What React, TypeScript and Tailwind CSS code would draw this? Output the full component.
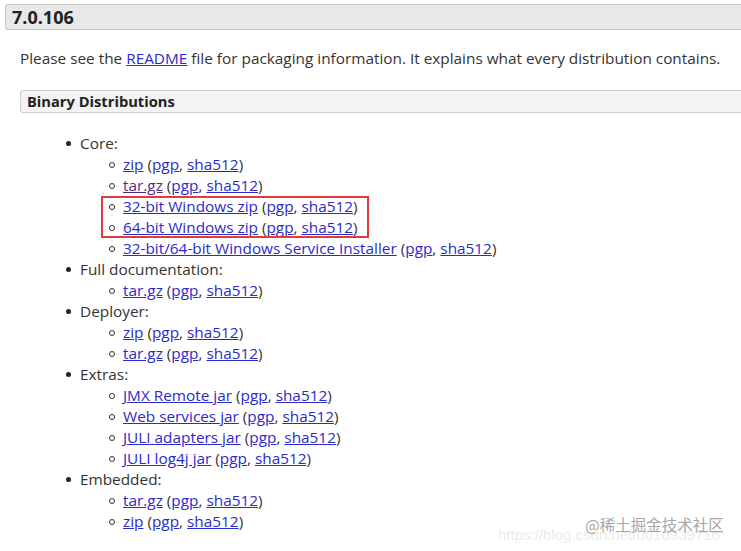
import React from "react";

const L = ({ children, v }: { children: React.ReactNode; v?: boolean }) => (
  <a href="#" className={v ? "underline text-[#5a2a8a]" : "underline text-[#2b2bc8]"}>
    {children}
  </a>
);

const Item = ({ name, v }: { name: string; v?: boolean }) => (
  <li className="flex items-center h-[21px]">
    <span className="w-[6px] h-[6px] rounded-full border border-[#333] mr-[8px] ml-[-14px]"></span>
    <span>
      <L v={v}>{name}</L> (<L>pgp</L>, <L>sha512</L>)
    </span>
  </li>
);

const Group = ({ title, items }: { title: string; items: { n: string; v?: boolean }[] }) => (
  <li>
    <div className="flex items-center h-[21px]">
      <span className="w-[5px] h-[5px] rounded-full bg-[#222] mr-[9px] ml-[-14px]"></span>
      <span>{title}</span>
    </div>
    <ul className="pl-[43px]">
      {items.map((it, i) => (
        <Item key={i} name={it.n} v={it.v} />
      ))}
    </ul>
  </li>
);

export default function App() {
  return (
    <div
      className="w-[741px] h-[551px] bg-white overflow-hidden relative text-[#333] text-[15.35px] leading-[21px]"
      style={{ fontFamily: '"Open Sans", "Noto Sans", sans-serif' }}
    >
      <div className="mt-[4px] ml-[5px] h-[26px] border border-r-0 border-[#c8c8c8] rounded-l-[3px] bg-[#e8e8e8] pl-[6px] flex items-center font-bold text-[18px] text-[#222]">
        7.0.106
      </div>
      <p className="ml-[20px] mt-[18px]">
        Please see the <L>README</L> file for packaging information. It explains what every distribution contains.
      </p>
      <div className="ml-[20px] mt-[21px] h-[23px] border border-r-0 border-[#cfcfcf] rounded-l-[3px] bg-[#f3f3f3] pl-[6px] flex items-center font-bold text-[14.7px] text-[#222]">
        Binary Distributions
      </div>
      <ul className="mt-[20px] pl-[80px]">
        <li>
          <div className="flex items-center h-[21px]">
            <span className="w-[5px] h-[5px] rounded-full bg-[#222] mr-[9px] ml-[-14px]"></span>
            <span>Core:</span>
          </div>
          <ul className="pl-[43px]">
            <Item name="zip" />
            <Item name="tar.gz" v />
            <div className="relative">
              <Item name="32-bit Windows zip" />
              <Item name="64-bit Windows zip" />
              <div className="absolute left-[-22px] top-[0px] w-[268px] h-[42px] border-2 border-[#e03c3c] pointer-events-none"></div>
            </div>
            <Item name="32-bit/64-bit Windows Service Installer" />
          </ul>
        </li>
        <Group title="Full documentation:" items={[{ n: "tar.gz" }]} />
        <Group title="Deployer:" items={[{ n: "zip" }, { n: "tar.gz" }]} />
        <Group
          title="Extras:"
          items={[
            { n: "JMX Remote jar" },
            { n: "Web services jar" },
            { n: "JULI adapters jar" },
            { n: "JULI log4j jar" },
          ]}
        />
        <Group title="Embedded:" items={[{ n: "tar.gz" }, { n: "zip" }]} />
      </ul>
      <div
        className="absolute left-[498px] top-[524px] text-[15px] leading-[21px] text-[#ececec] whitespace-nowrap"
        style={{ fontFamily: '"Liberation Sans", sans-serif' }}
      >
        https://blog.csdn.net/u010939716
      </div>
      <div
        className="absolute left-[585px] top-[514px] text-[15.5px] leading-[21px] text-[#a8a8a8] whitespace-nowrap"
        style={{ fontFamily: '"Noto Sans CJK SC", sans-serif' }}
      >
        @稀土掘金技术社区
      </div>
    </div>
  );
}
